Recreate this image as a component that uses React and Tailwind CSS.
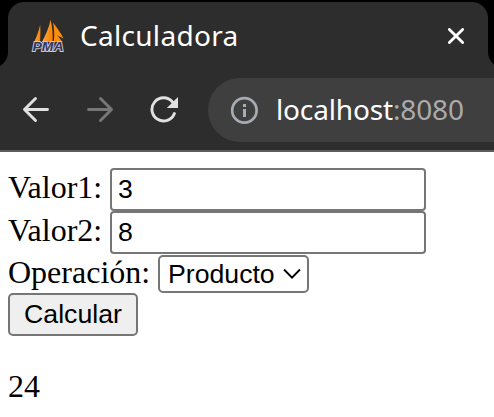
import React from 'react';

function PmaLogo() {
  return (
    <svg className="h-[34px] w-[34px] shrink-0" viewBox="0 0 34 34">
      <defs>
        <linearGradient id="sail" x1="0" x2="1" y1="0" y2="0.3">
          <stop offset="0" stopColor="#f3bd86" />
          <stop offset="0.55" stopColor="#f79a30" />
          <stop offset="1" stopColor="#ff8300" />
        </linearGradient>
      </defs>
      <path d="M9.200 5.500 C9.600 12 9.400 18 9 23 L3 23.500 C6 17 8 11 9.200 5.500Z" fill="url(#sail)" />
      <path d="M19.500 0.800 C21.500 8 22 16 21.500 23 L11 23 C14.500 16 18 9 19.500 0.800Z" fill="url(#sail)" />
      <path d="M22 3.500 C26 9 30 14 32.500 19.500 L26.500 16.500 L31.500 23 L22.800 23 C23.600 16 23.400 10 22 3.500Z" fill="#ff8d0c" />
      <text x="1.500" y="31.800" textLength="31" lengthAdjust="spacingAndGlyphs" fontFamily="Liberation Sans, sans-serif" fontSize="13" fontWeight="700" fontStyle="italic" fill="#35365f" stroke="#c9c9d4" strokeWidth="1.800" paintOrder="stroke">PMA</text>
    </svg>
  );
}

function TabStrip() {
  return (
    <div className="flex h-[68px] bg-black pt-[2px]">
      <svg className="mt-[50px] h-4 w-2 shrink-0" viewBox="8 0 8 16">
        <path d="M0 16 A16 16 0 0 0 16 0 V16Z" fill="#2d2d2d" />
      </svg>
      <div className="flex w-[480px] shrink-0 items-start rounded-t-[16px] bg-[#2d2d2d] pl-[23px]">
        <div className="mt-[17px] flex">
          <PmaLogo />
        </div>
        <span className="ml-[15px] mt-[13px] w-[170px] whitespace-nowrap font-['Noto_Sans'] text-[28px] leading-10 tracking-[0.3px] text-white">Calculadora</span>
        <svg className="ml-auto mr-[24px] mt-[26px] h-4 w-4" viewBox="0 0 16 16" fill="none" stroke="white" strokeWidth="2.800" strokeLinecap="round">
          <path d="M1.400 1.400 L14.600 14.600 M14.600 1.400 L1.400 14.600" />
        </svg>
      </div>
      <svg className="mt-[50px] h-4 w-[6px] shrink-0" viewBox="0 0 6 16">
        <path d="M0 0 A16 16 0 0 0 16 16 H0Z" fill="#2d2d2d" />
      </svg>
    </div>
  );
}

function Toolbar() {
  return (
    <div className="flex h-[84px] items-start border-b-2 border-[#5c5c5c] bg-[#2d2d2d] pt-[10px]">
      <svg className="ml-[22px] mt-[18px] h-7 w-7 shrink-0" viewBox="0 0 28 28" fill="none" stroke="#e1e1e1" strokeWidth="2.900" strokeLinecap="round" strokeLinejoin="round">
        <path d="M25.500 13.500 H2.500 M13.500 2.500 L2.500 13.500 L13.500 24.500" />
      </svg>
      <svg className="ml-[36px] mt-[18px] h-7 w-7 shrink-0" viewBox="0 0 28 28" fill="none" stroke="#777777" strokeWidth="2.900" strokeLinecap="round" strokeLinejoin="round">
        <path d="M2.500 13.500 H25.500 M14.500 2.500 L25.500 13.500 L14.500 24.500" />
      </svg>
      <svg className="ml-[36px] mt-[18px] h-7 w-7 shrink-0" viewBox="0 0 28 28" fill="none">
        <path d="M22.500 6 A11.600 11.600 0 1 0 24.400 17.500" stroke="#e1e1e1" strokeWidth="2.900" strokeLinecap="round" />
        <path d="M28 1 V12 H16.800Z" fill="#e1e1e1" />
      </svg>
      <div className="ml-[30px] flex h-16 grow items-start rounded-l-full bg-[#3f3f3f]">
        <svg className="ml-[22px] mt-[18px] h-7 w-7 shrink-0" viewBox="0 0 28 28">
          <circle cx="14.400" cy="14.400" r="12.200" fill="none" stroke="#a6abb4" strokeWidth="2.700" />
          <path d="M13 8 H16 V11 H13Z M13 13 H16 V21 H13Z" fill="#a6abb4" />
        </svg>
        <span className="ml-[18px] mt-[11px] whitespace-nowrap font-['Noto_Sans'] text-[28px] leading-10 tracking-[-0.15px] text-white">
          localhost<span className="text-[#ababab]">:8080</span>
        </span>
      </div>
    </div>
  );
}

function ValueField({ label, value }) {
  return (
    <label className="flex h-[43px] items-start">
      <span className="mt-px w-[102px] whitespace-nowrap">{label}</span>
      <input
        defaultValue={value}
        className="h-[43px] w-[316px] appearance-none rounded-[4px] border-2 border-[#767676] bg-white px-[6px] font-['Liberation_Sans'] text-[26.667px] leading-[30px] text-black outline-none"
      />
    </label>
  );
}

export default function App() {
  return (
    <div className="h-[417px] w-[494px] overflow-hidden bg-white">
      <TabStrip />
      <Toolbar />
      <form className="px-2 pt-4 font-['Liberation_Serif'] text-[32px] leading-9 text-black" onSubmit={(e) => e.preventDefault()}>
        <ValueField label="Valor1:" value="3" />
        <ValueField label="Valor2:" value="8" />
        <div className="flex h-[39px] items-start">
          <span className="w-[150px] whitespace-nowrap">Operación:</span>
          <div className="mt-px grid h-[38px] w-[151px] items-center">
            <select className="col-start-1 row-start-1 h-[38px] w-full appearance-none rounded-[5px] border-2 border-[#767676] bg-white pl-2 font-['Liberation_Sans'] text-[26.667px] leading-[30px] outline-none">
              <option>Producto</option>
            </select>
            <svg className="pointer-events-none col-start-1 row-start-1 mr-[8px] h-[12px] w-[18px] justify-self-end" viewBox="0 0 18 12" fill="none" stroke="black" strokeWidth="1.900">
              <path d="M1 1.500 L9 9.700 L17 1.500" />
            </svg>
          </div>
        </div>
        <button className="block h-[43px] w-[130px] rounded-[5px] border-2 border-[#767676] bg-[#efefef] pb-px text-center font-['Liberation_Sans'] text-[26.667px] leading-[30px]">Calcular</button>
        <output className="mt-8 block">24</output>
      </form>
    </div>
  );
}
